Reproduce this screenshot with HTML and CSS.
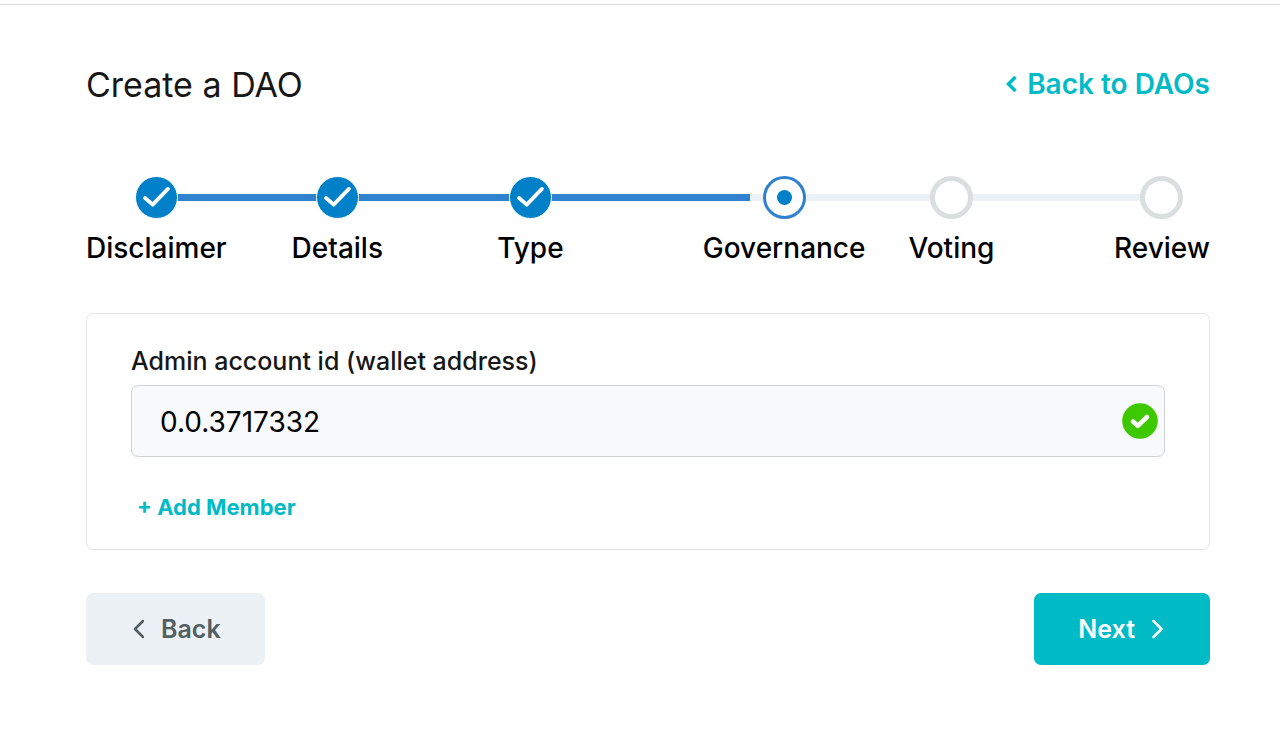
FILE: index.html
```
<!DOCTYPE html>
<html lang="en">
<head>
  <meta charset="UTF-8">
  <meta name="viewport" content="width=device-width, initial-scale=1.0">
  <title>Create a DAO</title>
  <link rel="stylesheet" href="styles.css">
</head>
<body>

<main class="container">
  <header class="page-header">
    <h1>Create a DAO</h1>
    <a href="#" class="back-link">
      <svg width="12" height="18" viewBox="0 0 12 18"><path d="M10.500 2 L3.500 9 L10.500 16" fill="none" stroke="currentColor" stroke-width="3.500"/></svg>
      Back to DAOs
    </a>
  </header>

  <!-- Wizard steps -->
  <div class="stepper">
    <div class="track"><div class="track-fill" style="width: 59%"></div></div>
    <ol class="steps">
      <li class="step">
        <span class="circle done"><svg width="43" height="43" viewBox="0 0 43 43"><path d="M9.500 22 L17.500 29 L33.500 12.500" /></svg></span>
        <span>Disclaimer</span>
      </li>
      <li class="step">
        <span class="circle done"><svg width="43" height="43" viewBox="0 0 43 43"><path d="M9.500 22 L17.500 29 L33.500 12.500" /></svg></span>
        <span>Details</span>
      </li>
      <li class="step">
        <span class="circle done"><svg width="43" height="43" viewBox="0 0 43 43"><path d="M9.500 22 L17.500 29 L33.500 12.500" /></svg></span>
        <span>Type</span>
      </li>
      <li class="step" aria-current="step">
        <span class="circle active"></span>
        <span>Governance</span>
      </li>
      <li class="step">
        <span class="circle"></span>
        <span>Voting</span>
      </li>
      <li class="step">
        <span class="circle"></span>
        <span>Review</span>
      </li>
    </ol>
  </div>

  <form>
    <section class="card">
      <label for="adminAccount">Admin account id (wallet address)</label>
      <div class="input-group">
        <input type="text" id="adminAccount" value="0.0.3717332">
        <svg class="valid-icon" width="36" height="36" viewBox="0 0 36 36">
          <circle cx="18" cy="18" r="17.800" fill="#3ec800"/>
          <path d="M11 18.500 L15.800 22.800 L25 14" fill="none" stroke="#fff" stroke-width="4.500" stroke-linecap="round" stroke-linejoin="round"/>
        </svg>
      </div>
      <button type="button" class="btn-add">+ Add Member</button>
    </section>

    <div class="actions">
      <button type="button" class="btn btn-back">
        <svg width="14" height="20" viewBox="0 0 14 20"><path d="M13 2 L5 10 L13 18"/></svg>
        Back
      </button>
      <button type="submit" class="btn btn-next">
        Next
        <svg width="14" height="20" viewBox="0 0 14 20"><path d="M1.500 2 L9.500 10 L1.500 18"/></svg>
      </button>
    </div>
  </form>
</main>

</body>
</html>
```
FILE: styles.css
```
* {
  box-sizing: border-box;
}
body {
  margin: 4px 0 0;
  border-top: 1px solid #e0e0e0;
  font-family: Inter, "Liberation Sans", sans-serif;
  color: #171717;
  background-color: white;
}
button,
input {
  font-family: inherit;
}
.container {
  padding: 56px 70px 56px 86px;
}
.page-header {
  display: flex;
  justify-content: space-between;
  align-items: center;
  height: 46px;
}
h1 {
  margin: 0;
  font-size: 34px;
  font-weight: 400;
}
.back-link {
  display: flex;
  align-items: center;
  gap: 10px;
  font-size: 28px;
  font-weight: 600;
  color: #00bac6;
  text-decoration: none;
}

/* Stepper */
.stepper {
  position: relative;
  margin-top: 69px;
}
.track {
  position: absolute;
  top: 18px;
  left: 70px;
  right: 48px;
  height: 7px;
  background-color: #ecf1f5;
}
.track-fill {
  height: 100%;
  background-color: #3182ce;
}
.steps {
  position: relative;
  display: grid;
  grid-template-columns: repeat(5, 1fr) auto;
  margin: 0;
  padding: 0;
  list-style: none;
}
.step {
  display: flex;
  flex-direction: column;
  align-items: center;
  justify-self: start;
  gap: 12px;
  font-size: 28px;
  font-weight: 500;
  line-height: 34px;
  color: black;
}
.circle {
  display: flex;
  align-items: center;
  justify-content: center;
  width: 43px;
  height: 43px;
  border: 5px solid #dadedf;
  border-radius: 50%;
  background-color: white;
}
.circle.done {
  border: 1px solid white;
  background-color: #0080c8;
}
.circle.done path {
  fill: none;
  stroke: white;
  stroke-width: 4;
  stroke-linecap: round;
  stroke-linejoin: round;
}
.circle.active {
  border: 3px solid #3182ce;
}
.circle.active::after {
  content: "";
  width: 15px;
  height: 15px;
  border-radius: 50%;
  background-color: #0080c8;
}

/* Form */
.card {
  margin-top: 48px;
  padding: 32px 44px 28px;
  border: 1px solid #e3e4e5;
  border-radius: 7px;
}
.card label {
  display: block;
  font-size: 25px;
  font-weight: 500;
  line-height: 31px;
}
.input-group {
  position: relative;
  margin-top: 8px;
}
.input-group input {
  display: block;
  width: 100%;
  height: 72px;
  padding: 2px 56px 0 28px;
  border: 1px solid #cfd2d4;
  border-radius: 7px;
  font-size: 28px;
  color: black;
  background-color: #f8f9fb;
}
.valid-icon {
  position: absolute;
  top: 18px;
  right: 7px;
}
.btn-add {
  display: block;
  margin-top: 36px;
  padding: 0 6px;
  border: none;
  font-size: 22px;
  font-weight: 700;
  line-height: 28px;
  color: #00bac6;
  background: none;
  cursor: pointer;
}
.actions {
  display: flex;
  justify-content: space-between;
  margin-top: 43px;
}
.btn {
  display: flex;
  align-items: center;
  gap: 17px;
  height: 72px;
  padding: 0 44px;
  border: none;
  border-radius: 7px;
  font-size: 25px;
  font-weight: 600;
  cursor: pointer;
}
.btn path {
  fill: none;
  stroke: currentColor;
  stroke-width: 2.5;
  stroke-linecap: round;
  stroke-linejoin: round;
}
.btn-back {
  color: #525f63;
  background-color: #ecf1f5;
}
.btn-next {
  color: white;
  background-color: #00bac6;
}
```
